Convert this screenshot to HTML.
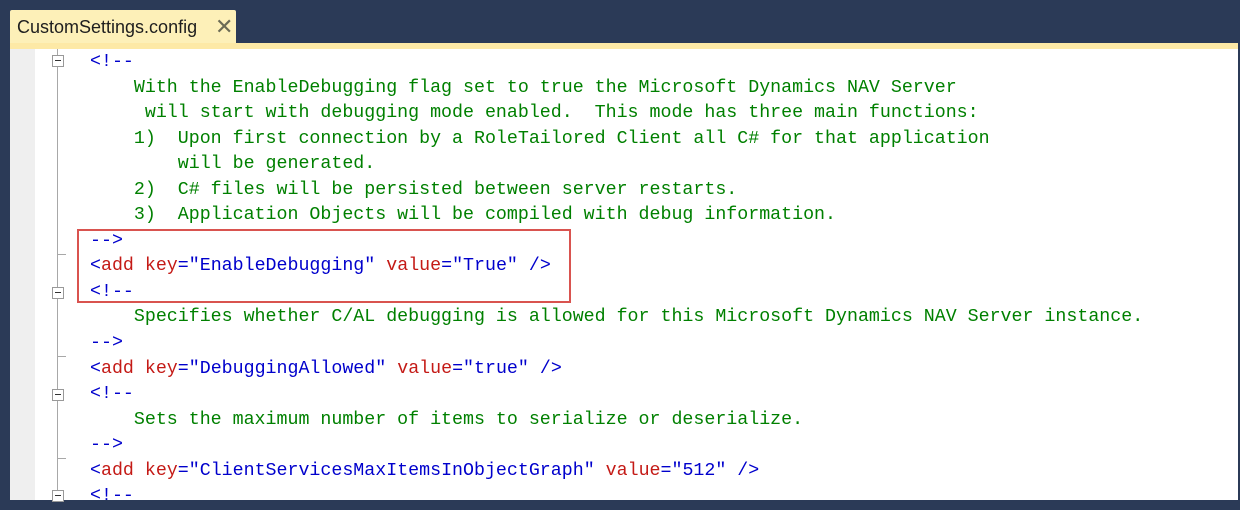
<!DOCTYPE html>
<html><head><style>
body{margin:0;width:1240px;height:502px;background:#2b3a57;position:relative;overflow:hidden;font-family:"Liberation Mono",monospace}
.tab{position:absolute;left:10px;top:10px;width:226px;height:34px;background:#fdf0b8;border-radius:2px 2px 0 0}
.tab span{position:absolute;left:7px;top:7px;font:18px "Liberation Sans",sans-serif;color:#1e1e1e}
.tab i{position:absolute;left:205px;top:4px;font:22px "Liberation Sans",sans-serif;color:#6b6b55;font-style:normal}
.strip{position:absolute;left:10px;top:43px;width:1228px;height:6px;background:#fde9a6}
.ed{position:absolute;left:10px;top:49px;width:1228px;height:451px;background:#fff}
.mg{position:absolute;left:10px;top:49px;width:25px;height:451px;background:#efefef}
.fl{position:absolute;left:57px;top:49px;width:1px;height:451px;background:#a8a8a8}
.bx{position:absolute;left:52px;width:10px;height:10px;border:1px solid #999;background:#fff}
.bx:after{content:"";position:absolute;left:2px;top:4px;width:6px;height:1px;background:#333}
.tk{position:absolute;left:58px;width:8px;height:1px;background:#a8a8a8}
pre{position:absolute;left:90px;top:50px;margin:0;font-size:18.3px;line-height:25.55px;color:#00008b}
.g{color:#008000}.r{color:#c41a16}.b{color:#0000cc}
.red{position:absolute;left:77px;top:229px;width:490px;height:70px;border:2px solid #d9534f}
</style></head><body>
<div class="tab"><span>CustomSettings.config</span><i>✕</i></div>
<div class="strip"></div>
<div class="ed"></div><div class="mg"></div><div class="fl"></div>
<div class="bx" style="top:55px"></div>
<div class="bx" style="top:287px"></div>
<div class="bx" style="top:389px"></div>
<div class="bx" style="top:490px"></div>
<div class="tk" style="top:254px"></div>
<div class="tk" style="top:356px"></div>
<div class="tk" style="top:458px"></div>
<pre><span class="b">&lt;!--</span>
<span class="g">    With the EnableDebugging flag set to true the Microsoft Dynamics NAV Server
     will start with debugging mode enabled.  This mode has three main functions:
    1)  Upon first connection by a RoleTailored Client all C# for that application
        will be generated.
    2)  C# files will be persisted between server restarts.
    3)  Application Objects will be compiled with debug information.</span>
<span class="b">--&gt;</span>
<span class="b">&lt;</span><span class="r">add key</span><span class="b">="EnableDebugging"</span> <span class="r">value</span><span class="b">="True" /&gt;</span>
<span class="b">&lt;!--</span>
<span class="g">    Specifies whether C/AL debugging is allowed for this Microsoft Dynamics NAV Server instance.</span>
<span class="b">--&gt;</span>
<span class="b">&lt;</span><span class="r">add key</span><span class="b">="DebuggingAllowed"</span> <span class="r">value</span><span class="b">="true" /&gt;</span>
<span class="b">&lt;!--</span>
<span class="g">    Sets the maximum number of items to serialize or deserialize.</span>
<span class="b">--&gt;</span>
<span class="b">&lt;</span><span class="r">add key</span><span class="b">="ClientServicesMaxItemsInObjectGraph"</span> <span class="r">value</span><span class="b">="512" /&gt;</span>
<span class="b">&lt;!--</span></pre>
<div class="red"></div>
</body></html>
